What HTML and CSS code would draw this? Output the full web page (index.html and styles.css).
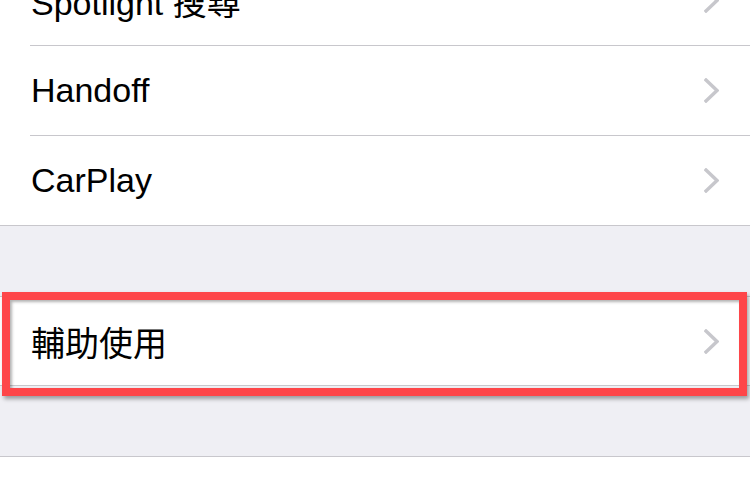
FILE: index.html
```html
<!DOCTYPE html>
<html lang="zh-Hant">
<head>
<meta charset="utf-8">
<link rel="stylesheet" href="styles.css">
</head>
<body>
<div class="group group-first">
  <div class="row"><span class="label">Spotlight 搜尋</span><svg class="chev" viewBox="0 0 15 25" width="15" height="25"><polyline points="2,2 13,12.5 2,23"/></svg></div>
  <div class="row"><span class="label">Handoff</span><svg class="chev" viewBox="0 0 15 25" width="15" height="25"><polyline points="2,2 13,12.5 2,23"/></svg></div>
  <div class="row last"><span class="label">CarPlay</span><svg class="chev" viewBox="0 0 15 25" width="15" height="25"><polyline points="2,2 13,12.5 2,23"/></svg></div>
</div>
<div class="group highlighted">
  <div class="row last"><span class="label">輔助使用</span><svg class="chev" viewBox="0 0 15 25" width="15" height="25"><polyline points="2,2 13,12.5 2,23"/></svg></div>
  <div class="highlight"></div>
</div>
<div class="group">
  <div class="row last"></div>
</div>
</body>
</html>
```
FILE: styles.css
```css
html, body {
  margin: 0;
  padding: 0;
  background: #efeff4;
  overflow: hidden;
  font-family: "Liberation Sans", "Noto Sans CJK TC", sans-serif;
}
.group {
  background: #fff;
  border-top: 1px solid #c8c7cc;
  border-bottom: 1px solid #c8c7cc;
  margin-bottom: 70px;
  position: relative;
}
.group-first {
  margin-top: -44px;
  border-top: none;
}
.row {
  height: 89px;
  margin-left: 30px;
  padding-right: 31px;
  display: flex;
  align-items: center;
  justify-content: space-between;
  border-bottom: 1px solid #c8c7cc;
}
.row.last {
  border-bottom: none;
  height: 88px;
}
.group-first .row.last {
  height: 89px;
}
.label {
  font-size: 34px;
  color: #000;
  padding-left: 1px;
}
.chev {
  display: block;
}
.chev polyline {
  fill: none;
  stroke: #c7c7cc;
  stroke-width: 3.4;
  stroke-linecap: square;
}
.highlight {
  position: absolute;
  left: 2px;
  top: -5px;
  width: 729px;
  height: 88px;
  border: 8px solid #fe4649;
  box-shadow: 2px 3px 4px rgba(0,0,0,0.35), inset 2px 2px 3px rgba(0,0,0,0.3);
}
```
